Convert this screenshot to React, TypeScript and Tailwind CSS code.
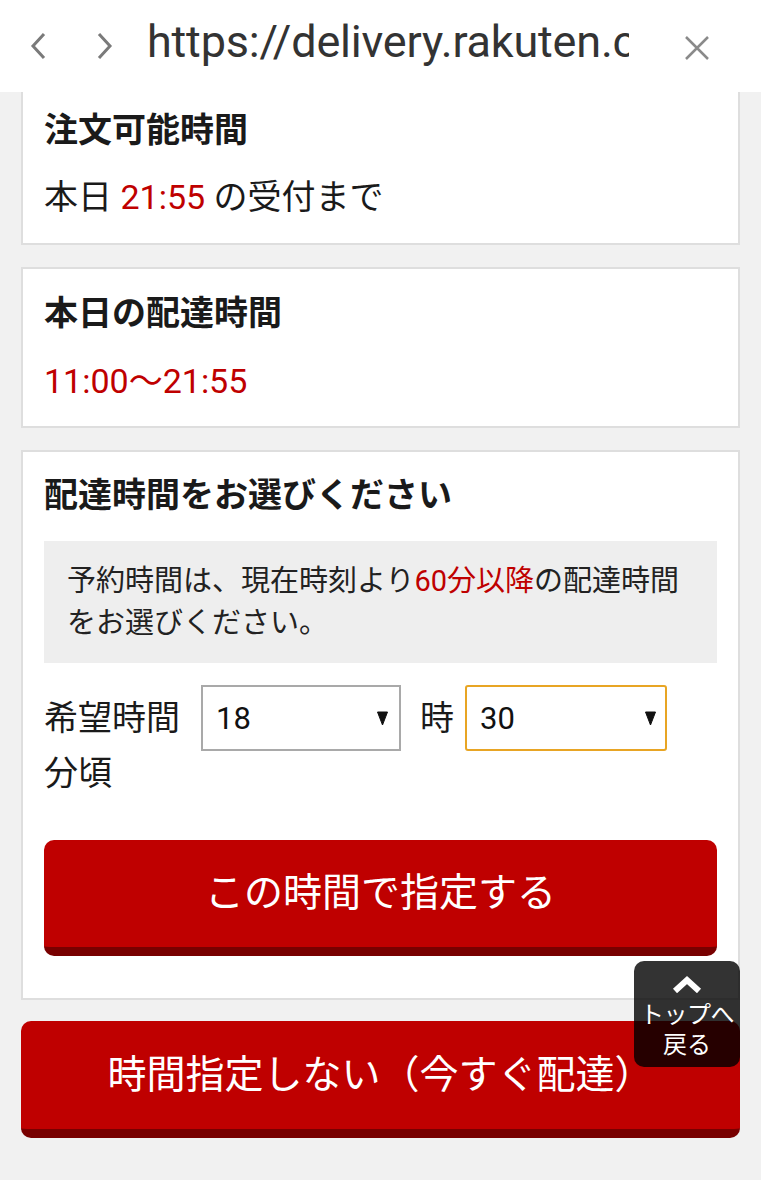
import React from "react";

function Caret() {
  return (
    <svg width="11" height="15" viewBox="0 0 11 15" className="shrink-0">
      <path d="M0.5 1 H10.5 L5.5 14 Z" fill="#111" stroke="#111" strokeWidth="1" strokeLinejoin="round" />
    </svg>
  );
}

function SelectBox({ value, className, arrowGap }: { value: string; className: string; arrowGap: string }) {
  return (
    <div className={`flex h-[66px] items-center bg-white pl-[13px] ${className}`}>
      <span className="text-[31px] leading-none text-[#111]">{value}</span>
      <span className={`ml-auto ${arrowGap}`}>
        <Caret />
      </span>
    </div>
  );
}

export default function App() {
  return (
    <div className="relative min-h-[1200px] w-[761px] bg-white font-['Roboto','Noto_Sans_CJK_JP',sans-serif] text-[#1a1a1a]">
      {/* browser address bar */}
      <header className="flex h-[92px] items-center bg-white pl-[30px]">
        <svg width="16" height="28" viewBox="0 0 16 28">
          <polyline points="14,2 3,14 14,26" fill="none" stroke="#7a7a7a" strokeWidth="3" />
        </svg>
        <svg width="16" height="28" viewBox="0 0 16 28" className="ml-[51px]">
          <polyline points="2,2 13,14 2,26" fill="none" stroke="#7a7a7a" strokeWidth="3" />
        </svg>
        <div className="ml-[34px] w-[482px] overflow-hidden whitespace-nowrap pb-[10px] text-[45px] leading-none tracking-[-0.2px] text-[#333]">
          https://delivery.rakuten.co.jp/
        </div>
        <svg width="26" height="26" viewBox="0 0 26 26" className="ml-[55px] mt-[4px]">
          <path d="M2 2 L24 24 M24 2 L2 24" stroke="#8a8a8a" strokeWidth="2.5" />
        </svg>
      </header>

      <main className="flex flex-col gap-[21px] bg-[#f1f1f1] px-[21px] pb-[42px]">
        {/* order deadline */}
        <section className="mb-[1px] border-2 border-t-0 border-[#dedede] bg-white px-[21px] pb-[20px] pt-[13px]">
          <h2 className="text-[34px] font-bold leading-[51px]">注文可能時間</h2>
          <p className="mt-[16px] text-[34px] leading-[51px]">
            本日 <span className="text-[#bf0000]">21:55</span> の受付まで
          </p>
        </section>

        {/* today's delivery window */}
        <section className="mb-[1px] border-2 border-[#dedede] bg-white px-[21px] pb-[19px] pt-[19px]">
          <h2 className="text-[34px] font-bold leading-[51px]">本日の配達時間</h2>
          <p className="mt-[17px] text-[34px] leading-[51px] text-[#bf0000]">11:00〜21:55</p>
        </section>

        {/* time picker */}
        <section className="border-2 border-[#dedede] bg-white px-[21px] pb-[42px] pt-[18px]">
          <h2 className="text-[34px] font-bold leading-[51px]">配達時間をお選びください</h2>
          <div className="mt-[20px] bg-[#eeeeee] px-[23px] py-[19px] text-[29px] leading-[42px] text-[#222]">
            予約時間は、現在時刻より<span className="text-[#bf0000]">60分以降</span>の配達時間をお選びください。
          </div>
          <div className="mt-[22px] flex flex-wrap items-center">
            <span className="text-[34px] leading-[51px]">希望時間</span>
            <SelectBox value="18" className="ml-[21px] w-[200px] border-2 border-[#a9a9a9]" arrowGap="mr-[11px]" />
            <span className="ml-[19px] text-[34px] leading-[51px]">時</span>
            <SelectBox
              value="30"
              className="ml-[11px] w-[202px] rounded-[3px] border-2 border-[#e8a524]"
              arrowGap="mr-[9px]"
            />
            <span className="text-[34px] leading-[44px]">分頃</span>
          </div>
          <button className="mt-[45px] flex h-[116px] w-full items-center justify-center rounded-[10px] border-b-[9px] border-[#780000] bg-[#bf0000] text-[39px] text-white">
            この時間で指定する
          </button>
        </section>

        <button className="flex h-[117px] w-full items-center justify-center rounded-[10px] border-b-[9px] border-[#780000] bg-[#bf0000] text-[39px] text-white">
          時間指定しない（今すぐ配達）
        </button>
      </main>

      {/* back-to-top floating button */}
      <div className="absolute left-[634px] top-[961px] flex h-[106px] w-[106px] flex-col items-center rounded-[10px] bg-black/80 pt-[14px] text-white">
        <svg width="32" height="18" viewBox="0 0 32 18">
          <polyline points="4,16 16,5 28,16" fill="none" stroke="#fff" strokeWidth="6" />
        </svg>
        <span className="mt-[7px] whitespace-nowrap text-[24px] leading-[30px] tracking-[-0.5px]">トップへ</span>
        <span className="text-[24px] leading-[30px]">戻る</span>
      </div>
    </div>
  );
}
